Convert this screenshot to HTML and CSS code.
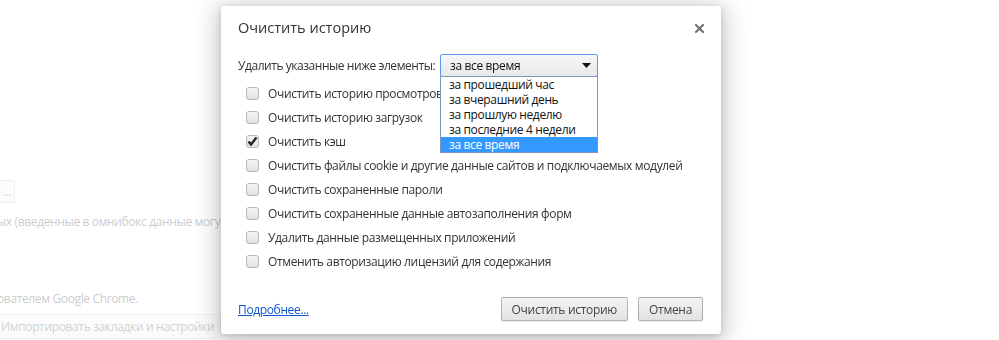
FILE: index.html
```html
<!DOCTYPE html>
<html lang="ru">
<head>
<meta charset="utf-8">
<title>Очистить историю</title>
<link rel="stylesheet" href="styles.css">
</head>
<body>
<main class="page">
  <div class="page-btn-row"><span class="page-btn small">...</span></div>
  <p class="page-text first">ых (введенные в омнибокс данные могут быть отправлены в Google)</p>
  <p class="page-text second">ователем Google Chrome.</p>
  <div class="page-btn-row"><span class="page-btn import">Импортировать закладки и настройки</span></div>
</main>
<div class="overlay"></div>
<section class="dialog">
  <header class="dialog-head">
    <h1 class="dialog-title">Очистить историю</h1>
    <span class="close" aria-label="Закрыть">
      <svg width="9" height="9" viewBox="0 0 9 9"><path d="M1 1L8 8M8 1L1 8" stroke="#6e6e6e" stroke-width="2" stroke-linecap="square"/></svg>
    </span>
  </header>
  <div class="dialog-body">
    <div class="period-row">
      <span class="period-label">Удалить указанные ниже элементы:</span>
      <div class="select-wrap">
        <div class="select">
          <span>за все время</span>
          <svg class="arrow" width="9" height="5" viewBox="0 0 9 5"><path d="M0 0H9L4.5 5Z" fill="#111"/></svg>
        </div>
        <ul class="options">
          <li>за прошедший час</li>
          <li>за вчерашний день</li>
          <li>за прошлую неделю</li>
          <li>за последние 4 недели</li>
          <li class="selected">за все время</li>
        </ul>
      </div>
    </div>
    <ul class="checks">
      <li><span class="box"></span>Очистить историю просмотров</li>
      <li><span class="box"></span>Очистить историю загрузок</li>
      <li><span class="box checked"><svg width="11" height="10" viewBox="0 0 11 10"><path d="M1.5 5.5L4 8.5L9.5 1.5" fill="none" stroke="#222" stroke-width="2.4"/></svg></span>Очистить кэш</li>
      <li><span class="box"></span>Очистить файлы cookie и другие данные сайтов и подключаемых модулей</li>
      <li><span class="box"></span>Очистить сохраненные пароли</li>
      <li><span class="box"></span>Очистить сохраненные данные автозаполнения форм</li>
      <li><span class="box"></span>Удалить данные размещенных приложений</li>
      <li><span class="box"></span>Отменить авторизацию лицензий для содержания</li>
    </ul>
  </div>
  <footer class="dialog-foot">
    <a class="more" href="#">Подробнее...</a>
    <div class="buttons">
      <button class="btn wide">Очистить историю</button>
      <button class="btn">Отмена</button>
    </div>
  </footer>
</section>
</body>
</html>
```
FILE: styles.css
```css
html, body {
  margin: 0;
  padding: 0;
  height: 100%;
  overflow: hidden;
  background: #fff;
}
body {
  font-family: "Open Sans", "Noto Sans", sans-serif;
  font-size: 12px;
  letter-spacing: -0.36px;
  color: #303030;
}
.page {
  padding-top: 180px;
  margin-left: -3px;
  width: 260px;
}
.page-btn-row { display: flex; }
.page-btn {
  display: inline-flex;
  align-items: center;
  border: 1px solid #c4c4c4;
  border-radius: 2px;
  background: linear-gradient(#f6f6f6, #ebebeb);
  color: #444;
  white-space: nowrap;
  overflow: hidden;
  box-sizing: border-box;
  height: 23px;
}
.page-btn.small {
  width: 18px;
  justify-content: flex-end;
  padding-right: 3px;
}
.page-btn.import {
  padding: 0 6px 0 3px;
  width: 224px;
  height: 25px;
}
.page-text {
  margin: 0;
  white-space: nowrap;
  line-height: 18px;
}
.page-text.first { margin-top: 10px; }
.page-text.second { margin-top: 59px; margin-bottom: 6px; }

.overlay {
  position: fixed;
  inset: 0;
  background: rgba(255, 255, 255, 0.75);
}

.dialog {
  position: fixed;
  left: 221px;
  top: 6px;
  width: 500px;
  height: 328px;
  box-sizing: border-box;
  background: #fff;
  border-radius: 3px;
  box-shadow: 0 4px 23px 5px rgba(0, 0, 0, 0.2), 0 2px 6px rgba(0, 0, 0, 0.15);
  display: flex;
  flex-direction: column;
  color: #333;
}
.dialog-head {
  display: flex;
  align-items: center;
  justify-content: space-between;
  padding: 12px 17px 0 17px;
  height: 20px;
}
.dialog-title {
  margin: 0;
  font-weight: normal;
  font-size: 14.5px;
  letter-spacing: 0;
  line-height: 20px;
  color: #333;
}
.close {
  display: flex;
  width: 9px;
  height: 9px;
}
.dialog-body {
  padding: 16px 17px 0 17px;
}
.period-row {
  display: flex;
  align-items: center;
  height: 23px;
}
.period-label {
  white-space: nowrap;
  flex-shrink: 0;
  letter-spacing: -0.45px;
}
.select-wrap {
  position: relative;
  margin-left: auto;
  margin-right: 106px;
}
.select {
  width: 158px;
  height: 23px;
  box-sizing: border-box;
  border: 1px solid #5b9ae8;
  border-radius: 2px;
  background: linear-gradient(#f6f6f6, #e8e8e8);
  display: flex;
  align-items: center;
  justify-content: space-between;
  padding: 0 5px 0 9px;
  color: #111;
}
.arrow { margin-right: 1px; }
.options {
  position: absolute;
  left: 0;
  top: 22px;
  width: 158px;
  box-sizing: border-box;
  margin: 0;
  padding: 0;
  list-style: none;
  background: #fff;
  border: 1px solid #7a96bf;
  color: #111;
  z-index: 2;
}
.options li {
  height: 15px;
  line-height: 15px;
  padding-left: 8px;
  white-space: nowrap;
}
.options li.selected {
  background: #3399ff;
  color: #fff;
}
.checks {
  list-style: none;
  margin: 4px 0 0 0;
  padding: 0 0 0 8px;
}
.checks li {
  display: flex;
  align-items: center;
  height: 24px;
  gap: 9px;
  white-space: nowrap;
}
.box {
  flex-shrink: 0;
  width: 13px;
  height: 13px;
  box-sizing: border-box;
  border: 1px solid #b8b8b8;
  border-radius: 3px;
  background: linear-gradient(#f5f5f5, #e3e3e3);
  display: flex;
  align-items: center;
  justify-content: center;
}
.box svg { margin-top: -1px; }
.dialog-foot {
  margin-top: auto;
  display: flex;
  align-items: center;
  justify-content: space-between;
  padding: 0 18px 13px 17px;
}
.more {
  color: #15c;
  text-decoration: underline;
}
.buttons {
  display: flex;
  gap: 10px;
}
.btn {
  font: inherit;
  letter-spacing: -0.3px;
  white-space: nowrap;
  color: #444;
  height: 24px;
  padding: 0 10px;
  min-width: 64px;
  border: 1px solid rgba(0, 0, 0, 0.25);
  border-radius: 2px;
  background: linear-gradient(#f4f4f4, #e2e2e2);
  box-shadow: 0 1px 0 rgba(0, 0, 0, 0.08);
}
.btn.wide { min-width: 127px; }
```
